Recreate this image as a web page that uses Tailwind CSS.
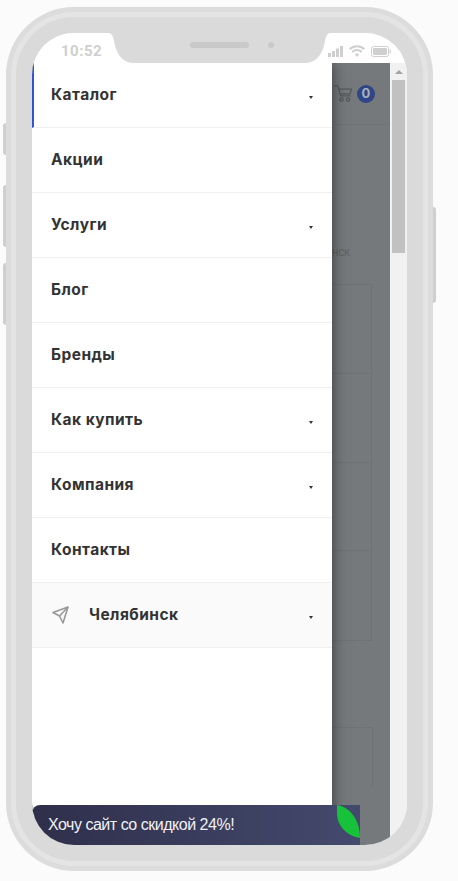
<!DOCTYPE html>
<html>
<head>
    <meta charset="utf-8">
    <title>Меню</title>
    <script src="https://cdn.jsdelivr.net/npm/@tailwindcss/browser@4"></script>
</head>
<body class="bg-[#fbfbfb] font-['Inter',sans-serif] h-[881px] overflow-hidden">
    <div class="relative ml-[6px] mt-[7px] w-[427px] h-[864px] rounded-[68px] bg-[#dcdcdc] p-[5px]">
        <!-- side buttons -->
        <div class="absolute left-[-3px] top-[116px] w-[3px] h-[32px] bg-[#cfcfcf] rounded-l-sm"></div>
        <div class="absolute left-[-3px] top-[178px] w-[3px] h-[62px] bg-[#cfcfcf] rounded-l-sm"></div>
        <div class="absolute left-[-3px] top-[256px] w-[3px] h-[62px] bg-[#cfcfcf] rounded-l-sm"></div>
        <div class="absolute right-[-3px] top-[200px] w-[3px] h-[96px] bg-[#cfcfcf] rounded-r-sm"></div>

        <div class="h-full rounded-[63px] bg-[#e4e4e4] p-[5px]">
            <div class="h-full rounded-[58px] bg-[#dadada] p-[16px]">
                <div class="relative h-full w-[375px] rounded-[42px] overflow-hidden bg-white flex flex-col">
                    <!-- status bar -->
                    <div class="h-[30px] shrink-0 relative bg-white">
                        <span class="absolute left-[29px] top-[9px] font-['Roboto',sans-serif] text-[15px] leading-[18px] font-bold tracking-[0.5px] text-[#cfcfcf]">10:52</span>
                        <svg class="absolute left-[76px] top-0" width="223" height="30" viewBox="0 0 223 30" fill="#dadada"><path d="M0 0C4 0 5 3 6 8 8 20 14 30 26 30H197C209 30 215 20 217 8 218 3 219 0 223 0Z"/></svg>
                        <div class="absolute left-[158px] top-[9px] w-[59px] h-[6px] rounded-full bg-[#c9c9c9]"></div>
                        <div class="absolute left-[236px] top-[9px] w-[6px] h-[6px] rounded-full bg-[#c9c9c9]"></div>
                        <div class="absolute left-[296px] top-[12px] flex items-center gap-[6px]">
                            <svg width="15" height="11" viewBox="0 0 15 11" fill="#cfcfcf"><rect x="0" y="7" width="3" height="4"/><rect x="4" y="5" width="3" height="6"/><rect x="8" y="2.5" width="3" height="8.5"/><rect x="12" y="0" width="3" height="11"/></svg>
                            <svg width="16" height="12" viewBox="0 0 16 12" fill="none" stroke="#cfcfcf" stroke-width="2"><path d="M.7 4.2a10.4 10.4 0 0 1 14.6 0"/><path d="M3.2 7a6.8 6.8 0 0 1 9.6 0"/><path d="M8 12l-2.2-2.4a3 3 0 0 1 4.4 0z" fill="#cfcfcf" stroke="none"/></svg>
                            <svg width="20" height="11" viewBox="0 0 20 11" fill="none"><rect x=".5" y=".5" width="17" height="10" rx="2" stroke="#cfcfcf"/><rect x="2" y="2" width="14" height="7" rx="1" fill="#cfcfcf"/><rect x="18.6" y="3.5" width="1.2" height="4" fill="#cfcfcf"/></svg>
                        </div>
                    </div>

                    <!-- page under the drawer -->
                    <div class="flex-1 flex min-h-0">
                        <div class="w-[358px] relative bg-[#75797c] shrink-0 overflow-hidden">
                            <div class="absolute left-[300px] top-0 w-[58px]">
                                <div class="flex items-center h-[62px] border-b border-[#707477] pl-[2px] gap-[5px]">
                                    <svg width="18" height="17" viewBox="0 0 18 17" fill="none" stroke="#55595b" stroke-width="1.3"><path d="M0 .8h4l2.6 10h10"/><path d="M5 4.2h12.4l-1.4 4.6H6.4"/><circle cx="7.5" cy="14.5" r="1.7"/><circle cx="14" cy="14.5" r="1.7"/></svg>
                                    <span class="w-[18px] h-[18px] rounded-full bg-[#2f4585] text-[#a9b0bd] text-[13px] font-bold flex items-center justify-center">0</span>
                                </div>
                                <span class="absolute left-0 top-[184px] font-['Roboto',sans-serif] text-[9px] leading-[12px] font-medium text-[#606467]">НСК</span>
                            </div>
                            <div class="absolute left-[290px] top-[221px] w-[50px] h-[357px] border border-[#6e7275] grid grid-rows-4 divide-y divide-[#6e7275]">
                                <div></div><div></div><div></div><div></div>
                            </div>
                            <div class="absolute left-[290px] top-[664px] w-[51px] h-[60px] border-t border-r border-[#6e7275]"></div>

                            <!-- drawer -->
                            <nav class="absolute left-0 top-0 bottom-0 w-[300px] bg-white shadow-[0_0_14px_rgba(0,0,0,0.55)] text-[15.5px] font-[650] tracking-[0.45px] text-[#333333]">
                                <a class="flex items-center justify-between h-[65px] pl-[17px] pr-[19px] border-b border-[#f0f0f0] border-l-2 border-l-[#2f55d4]"><span>Каталог</span><i class="w-0 h-0 border-x-[2.5px] border-x-transparent border-t-[3px] border-t-[#333] mt-[5px]"></i></a>
                                <a class="flex items-center h-[65px] px-[19px] border-b border-[#f0f0f0]"><span>Акции</span></a>
                                <a class="flex items-center justify-between h-[65px] px-[19px] border-b border-[#f0f0f0]"><span>Услуги</span><i class="w-0 h-0 border-x-[2.5px] border-x-transparent border-t-[3px] border-t-[#333] mt-[5px]"></i></a>
                                <a class="flex items-center h-[65px] px-[19px] border-b border-[#f0f0f0]"><span>Блог</span></a>
                                <a class="flex items-center h-[65px] px-[19px] border-b border-[#f0f0f0]"><span>Бренды</span></a>
                                <a class="flex items-center justify-between h-[65px] px-[19px] border-b border-[#f0f0f0]"><span>Как купить</span><i class="w-0 h-0 border-x-[2.5px] border-x-transparent border-t-[3px] border-t-[#333] mt-[5px]"></i></a>
                                <a class="flex items-center justify-between h-[65px] px-[19px] border-b border-[#f0f0f0]"><span>Компания</span><i class="w-0 h-0 border-x-[2.5px] border-x-transparent border-t-[3px] border-t-[#333] mt-[5px]"></i></a>
                                <a class="flex items-center h-[65px] px-[19px] border-b border-[#f0f0f0]"><span>Контакты</span></a>
                                <a class="flex items-center justify-between h-[65px] px-[19px] border-b border-[#f0f0f0] bg-[#fafafa]">
                                    <span class="flex items-center gap-[20px]">
                                        <svg width="18" height="18" viewBox="0 0 18 18" fill="none" stroke="#999999" stroke-width="1.6" stroke-linejoin="round"><path d="M2 6.5L17 1 12 17 8.5 10z"/><path d="M8.5 10L17 1"/></svg>
                                        <span>Челябинск</span>
                                    </span>
                                    <i class="w-0 h-0 border-x-[2.5px] border-x-transparent border-t-[3px] border-t-[#333] mt-[5px]"></i>
                                </a>
                            </nav>
                        </div>
                        <!-- scrollbar -->
                        <div class="flex-1 bg-[#f1f1f1] flex flex-col items-center">
                            <div class="h-[17px] flex items-center justify-center">
                                <i class="w-0 h-0 border-x-[4px] border-x-transparent border-b-[4px] border-b-[#a3a3a3]"></i>
                            </div>
                            <div class="w-[13px] h-[173px] bg-[#c1c1c1]"></div>
                        </div>
                    </div>

                    <!-- offer bar -->
                    <div class="absolute left-0 bottom-0 w-[328px] h-[40px] bg-gradient-to-r from-[#2f2f4b] to-[#444a6e] rounded-tl-[10px] rounded-bl-[40px] overflow-hidden flex items-center pl-[16px] font-['Liberation_Sans',sans-serif] text-[16px] tracking-[-0.48px] text-[#f1f1f4]">
                        Хочу сайт со скидкой 24%!
                        <svg class="absolute right-0 top-0" width="23" height="33" viewBox="0 0 23 33"><path d="M0 0C13 2 23 15 23 33 11 31 0 22 0 8z" fill="#18c13a"/></svg>
                    </div>
                </div>
            </div>
        </div>
    </div>
</body>
</html>
